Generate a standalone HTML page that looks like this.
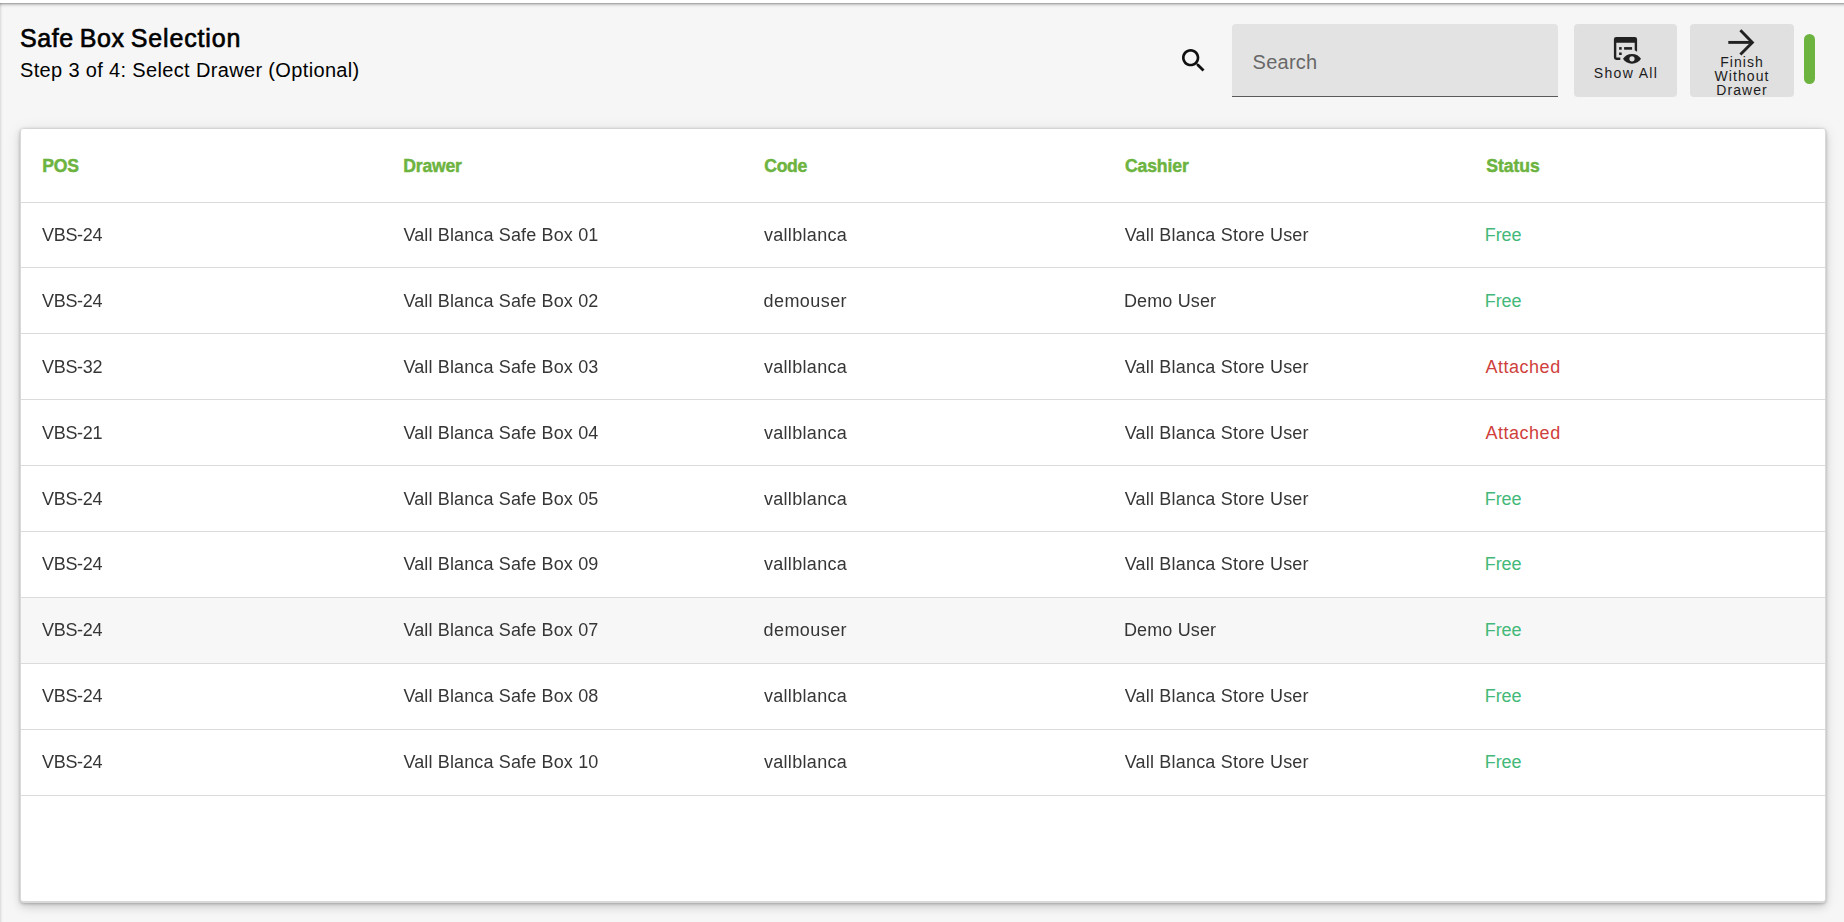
<!DOCTYPE html>
<html lang="en"><head><meta charset="utf-8"><title>Safe Box Selection</title>
<style>
*{box-sizing:border-box;margin:0;padding:0}
html,body{width:1844px;height:922px;overflow:hidden;background:#f6f6f6}
body{position:relative;font-family:"Liberation Sans",Arial,sans-serif;color:#333;-webkit-font-smoothing:antialiased}
.abs{position:absolute}
.topwhite{left:0;top:0;width:1844px;height:3px;background:#fff}
.topshadow{left:0;top:3px;width:1844px;height:5px;background:linear-gradient(#ababab 0,#ababab 20%,#cdcdcd 20%,#cdcdcd 40%,#e3e3e3 40%,#e3e3e3 60%,#eeeeee 60%,#eeeeee 80%,#f4f4f4 80%)}
.leftshadow{left:0;top:3px;width:3px;height:919px;background:linear-gradient(90deg,rgba(0,0,0,.09) 0,rgba(0,0,0,.09) 33.3%,rgba(0,0,0,.04) 33.3%,rgba(0,0,0,.04) 66.6%,rgba(0,0,0,.01) 66.6%)}
h1{left:20px;top:23px;font-size:25px;line-height:30px;font-weight:400;color:#000;white-space:nowrap;letter-spacing:.55px;word-spacing:-1.3px;-webkit-text-stroke:.65px #000}
h1 span{letter-spacing:.84px}
.sub{left:20px;top:58px;font-size:20px;line-height:24px;color:#000;white-space:nowrap;letter-spacing:.346px}
.search{left:1232px;top:24px;width:326px;height:73px;background:#e3e3e3;border-radius:4px 4px 0 0;border-bottom:1px solid #5a5a5a}
.search span{position:absolute;left:20.6px;top:26px;letter-spacing:.25px;font-size:20px;line-height:24px;color:#686868;white-space:nowrap}
.btn{top:24px;height:73px;background:#e0e0e0;border-radius:4px;color:#1c1c1c;font-size:14px;letter-spacing:1.05px;text-align:center}
.btn .t{position:absolute;left:0;right:0;white-space:nowrap;line-height:14px}
.bar{left:1804px;top:34px;width:11px;height:50px;border-radius:6px;background:#6db33f}
.cardsh{left:20px;top:129px;width:1806px;height:774px;background:#d9d9d9;border-radius:4px;box-shadow:0 .96px 3.01px 0 rgba(0,0,0,.2335),0 3.09px 8.22px 0 rgba(0,0,0,.1198),0 1.01px 15.47px 0 rgba(0,0,0,.0803)}
.card{left:21px;top:129px;width:1804px;height:772px;background:#fff;border-radius:2px}
.ln{left:21px;width:1804px;height:1px;background:#dbdbdb}
.hov{left:21px;width:1804px;background:#f7f7f7}
.th{font-weight:700;color:#6db33f;-webkit-text-stroke:.45px #6db33f;font-size:17.6px;line-height:20px;white-space:nowrap}
.td{font-size:18px;line-height:20px;white-space:nowrap;color:#363636}
.gray{left:0;top:0;width:1844px;height:922px;will-change:transform}
.free{color:#42b979}.att{color:#cf3f3c}
</style></head><body>
<div class="abs topwhite"></div><div class="abs topshadow"></div><div class="abs leftshadow"></div>
<h1 class="abs">Safe Box <span>Selection</span></h1>
<div class="abs sub">Step 3 of 4: Select Drawer (Optional)</div>
<svg class="abs" style="left:1178px;top:45px" width="32" height="32" viewBox="0 0 24 24"><path fill="#111" d="M15.5 14h-.79l-.28-.27C15.41 12.59 16 11.11 16 9.5 16 5.91 13.09 3 9.5 3S3 5.91 3 9.5 5.91 16 9.5 16c1.61 0 3.09-.59 4.23-1.57l.27.28v.79l4.4 4.39L19.89 18.4l-4.39-4.4zm-6 0C7.01 14 5 11.99 5 9.5S7.01 5 9.5 5 14 7.01 14 9.5 11.99 14 9.5 14z"/></svg>
<div class="abs search"><span>Search</span></div>
<div class="abs btn" style="left:1574px;width:103px">
<svg class="abs" style="left:36px;top:9px" width="34" height="34" viewBox="1610 33 34 34">
<g fill="#212121"><path d="M1616.2 36.9h18.6a2.3 2.3 0 0 1 2.3 2.3v12.6l-2.4-1.5v-7.5h-18.4v14.7h4v2.4h-4.1a2.3 2.3 0 0 1-2.3-2.3v-18.4a2.3 2.3 0 0 1 2.3-2.3z"/>
<rect x="1619.1" y="47.1" width="2.6" height="2.6"/><rect x="1624.1" y="47.1" width="8" height="2.6"/><rect x="1619.1" y="52.5" width="2.6" height="2.5"/>
<path fill-rule="evenodd" d="M1623 58.85c1.6-3 5-4.95 9-4.95s7.4 1.95 9 4.95c-1.6 3-5 4.95-9 4.95s-7.4-1.95-9-4.95zm9-2.6a2.6 2.6 0 1 0 0 5.2 2.6 2.6 0 0 0 0-5.2z"/></g></svg>
<div class="t" style="top:42px;letter-spacing:1.35px;left:1px">Show All</div></div>
<div class="abs btn" style="left:1690px;width:104px">
<svg class="abs" style="left:32px;top:0" width="40" height="36" viewBox="1722 24 40 36"><g fill="none" stroke="#212121" stroke-width="2.9"><path d="M1728.3 42.4h24"/><path d="M1740.4 30.35l11.95 12.05-11.95 12.05" stroke-linejoin="miter"/></g></svg>
<div class="t" style="top:31px">Finish</div><div class="t" style="top:45px">Without</div><div class="t" style="top:59px">Drawer</div></div>
<div class="abs bar"></div>
<div class="abs cardsh"></div><div class="abs card"></div>

<div class="abs hov" style="top:598px;height:65px"></div>
<div class="abs ln" style="top:202px"></div>
<div class="abs ln" style="top:267px"></div>
<div class="abs ln" style="top:333px"></div>
<div class="abs ln" style="top:399px"></div>
<div class="abs ln" style="top:465px"></div>
<div class="abs ln" style="top:531px"></div>
<div class="abs ln" style="top:597px"></div>
<div class="abs ln" style="top:663px"></div>
<div class="abs ln" style="top:729px"></div>
<div class="abs ln" style="top:795px"></div>
<div class="abs th" style="left:42.18px;top:156px;letter-spacing:-0.137px">POS</div>
<div class="abs th" style="left:403.28px;top:156px;letter-spacing:-0.19px">Drawer</div>
<div class="abs th" style="left:764.35px;top:156px;letter-spacing:-0.342px">Code</div>
<div class="abs th" style="left:1124.95px;top:156px;letter-spacing:-0.117px">Cashier</div>
<div class="abs th" style="left:1486.2px;top:156px;letter-spacing:-0.02px">Status</div>
<div class="abs td free" style="left:1484.8px;top:225px;letter-spacing:-0.117px">Free</div>
<div class="abs td free" style="left:1484.8px;top:291px;letter-spacing:-0.117px">Free</div>
<div class="abs td att" style="left:1485.4px;top:357px;letter-spacing:0.532px">Attached</div>
<div class="abs td att" style="left:1485.4px;top:423px;letter-spacing:0.532px">Attached</div>
<div class="abs td free" style="left:1484.8px;top:489px;letter-spacing:-0.117px">Free</div>
<div class="abs td free" style="left:1484.8px;top:554px;letter-spacing:-0.117px">Free</div>
<div class="abs td free" style="left:1484.8px;top:620px;letter-spacing:-0.117px">Free</div>
<div class="abs td free" style="left:1484.8px;top:686px;letter-spacing:-0.117px">Free</div>
<div class="abs td free" style="left:1484.8px;top:752px;letter-spacing:-0.117px">Free</div>
<div class="abs gray"><div class="abs td" style="left:41.98px;top:225px;letter-spacing:-0.295px">VBS-24</div>
<div class="abs td" style="left:403.38px;top:225px;letter-spacing:0.143px">Vall Blanca Safe Box 01</div>
<div class="abs td" style="left:763.88px;top:225px;letter-spacing:0.325px">vallblanca</div>
<div class="abs td" style="left:1124.68px;top:225px;letter-spacing:0.196px">Vall Blanca Store User</div>
<div class="abs td" style="left:41.98px;top:291px;letter-spacing:-0.295px">VBS-24</div>
<div class="abs td" style="left:403.38px;top:291px;letter-spacing:0.143px">Vall Blanca Safe Box 02</div>
<div class="abs td" style="left:763.55px;top:291px;letter-spacing:0.429px">demouser</div>
<div class="abs td" style="left:1123.9px;top:291px;letter-spacing:0.144px">Demo User</div>
<div class="abs td" style="left:41.98px;top:357px;letter-spacing:-0.295px">VBS-32</div>
<div class="abs td" style="left:403.38px;top:357px;letter-spacing:0.143px">Vall Blanca Safe Box 03</div>
<div class="abs td" style="left:763.88px;top:357px;letter-spacing:0.325px">vallblanca</div>
<div class="abs td" style="left:1124.68px;top:357px;letter-spacing:0.196px">Vall Blanca Store User</div>
<div class="abs td" style="left:41.98px;top:423px;letter-spacing:-0.295px">VBS-21</div>
<div class="abs td" style="left:403.38px;top:423px;letter-spacing:0.143px">Vall Blanca Safe Box 04</div>
<div class="abs td" style="left:763.88px;top:423px;letter-spacing:0.325px">vallblanca</div>
<div class="abs td" style="left:1124.68px;top:423px;letter-spacing:0.196px">Vall Blanca Store User</div>
<div class="abs td" style="left:41.98px;top:489px;letter-spacing:-0.295px">VBS-24</div>
<div class="abs td" style="left:403.38px;top:489px;letter-spacing:0.143px">Vall Blanca Safe Box 05</div>
<div class="abs td" style="left:763.88px;top:489px;letter-spacing:0.325px">vallblanca</div>
<div class="abs td" style="left:1124.68px;top:489px;letter-spacing:0.196px">Vall Blanca Store User</div>
<div class="abs td" style="left:41.98px;top:554px;letter-spacing:-0.295px">VBS-24</div>
<div class="abs td" style="left:403.38px;top:554px;letter-spacing:0.143px">Vall Blanca Safe Box 09</div>
<div class="abs td" style="left:763.88px;top:554px;letter-spacing:0.325px">vallblanca</div>
<div class="abs td" style="left:1124.68px;top:554px;letter-spacing:0.196px">Vall Blanca Store User</div>
<div class="abs td" style="left:41.98px;top:620px;letter-spacing:-0.295px">VBS-24</div>
<div class="abs td" style="left:403.38px;top:620px;letter-spacing:0.143px">Vall Blanca Safe Box 07</div>
<div class="abs td" style="left:763.55px;top:620px;letter-spacing:0.429px">demouser</div>
<div class="abs td" style="left:1123.9px;top:620px;letter-spacing:0.144px">Demo User</div>
<div class="abs td" style="left:41.98px;top:686px;letter-spacing:-0.295px">VBS-24</div>
<div class="abs td" style="left:403.38px;top:686px;letter-spacing:0.143px">Vall Blanca Safe Box 08</div>
<div class="abs td" style="left:763.88px;top:686px;letter-spacing:0.325px">vallblanca</div>
<div class="abs td" style="left:1124.68px;top:686px;letter-spacing:0.196px">Vall Blanca Store User</div>
<div class="abs td" style="left:41.98px;top:752px;letter-spacing:-0.295px">VBS-24</div>
<div class="abs td" style="left:403.38px;top:752px;letter-spacing:0.143px">Vall Blanca Safe Box 10</div>
<div class="abs td" style="left:763.88px;top:752px;letter-spacing:0.325px">vallblanca</div>
<div class="abs td" style="left:1124.68px;top:752px;letter-spacing:0.196px">Vall Blanca Store User</div></div>
</body></html>
